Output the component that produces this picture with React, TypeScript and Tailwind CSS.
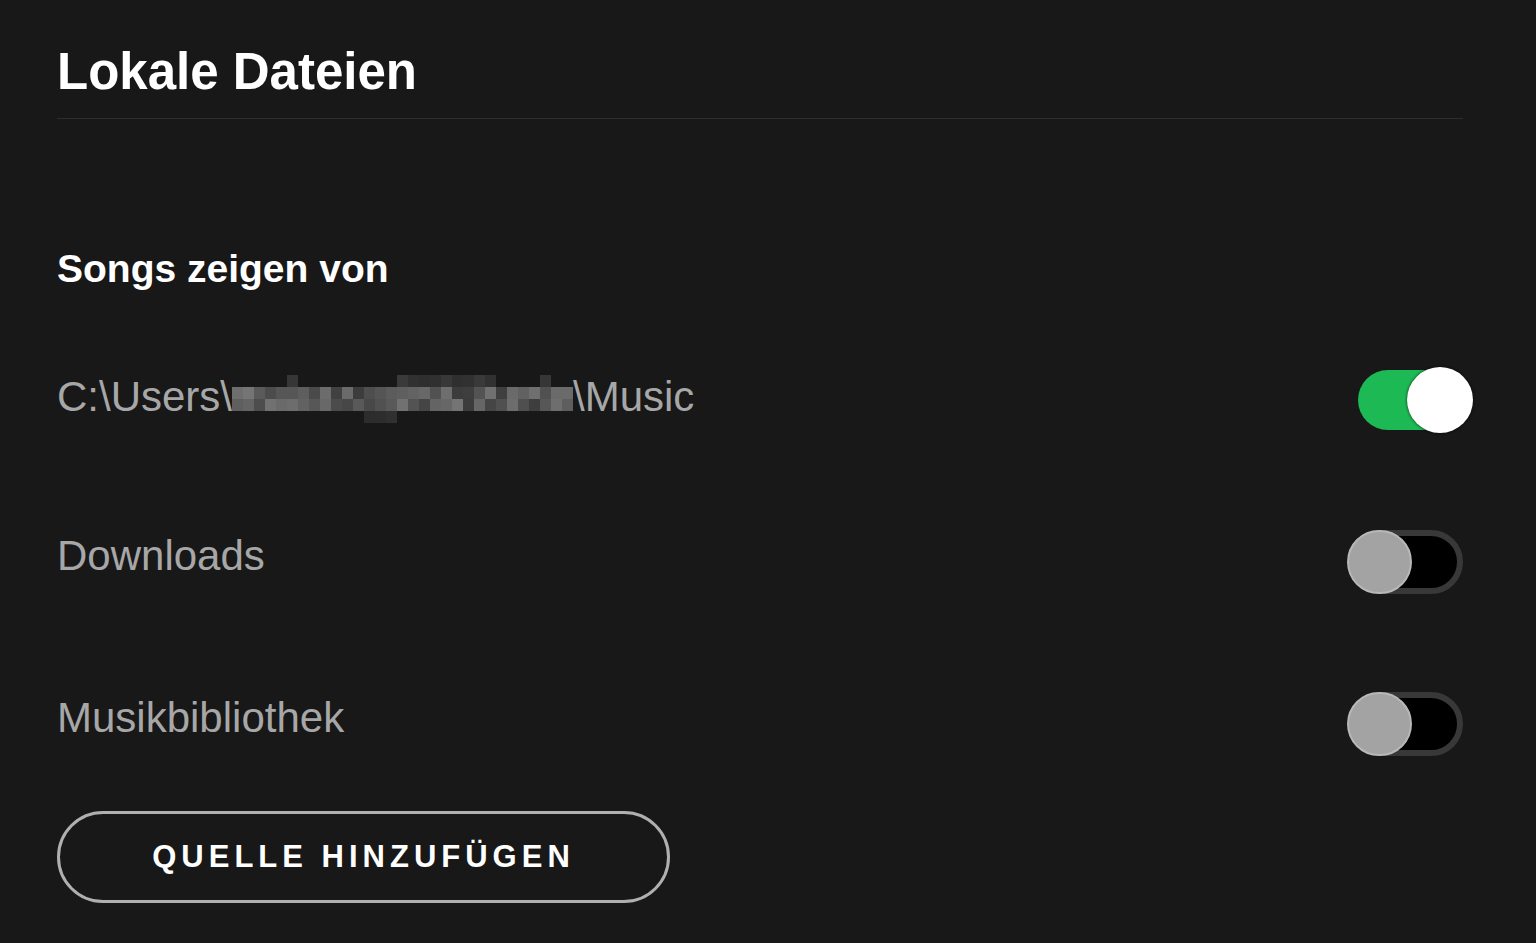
import React from 'react';

// ── blurred user name (pixel mosaic) ──
const Mosaic = () => {
    const cols = 31;
    const cw = 11;
    const ch = 12;
    let seed = 11;
    const rnd = () => {
        seed = (seed * 9301 + 49297) % 233280;
        return seed / 233280;
    };
    const gray = (lo: number, hi: number) => {
        const v = Math.round(lo + rnd() * (hi - lo));
        const h = v.toString(16).padStart(2, '0');
        return `#${h}${h}${h}`;
    };
    const cells: { x: number; y: number; c: string }[] = [];
    // ascender row, sparse
    [5, 15, 16, 17, 18, 19, 20, 21, 22, 23, 28].forEach((c) => {
        cells.push({ x: c * cw, y: 0, c: gray(0x2c, 0x3c) });
    });
    // two body rows
    for (let r = 0; r < 2; r++) {
        for (let c = 0; c < cols; c++) {
            cells.push({ x: c * cw, y: ch + r * ch, c: gray(0x3a, 0x78) });
        }
    }
    // descender of the "y"
    [12, 13, 14].forEach((c) => {
        cells.push({ x: c * cw, y: 3 * ch, c: gray(0x2c, 0x38) });
    });
    return (
        <svg width="341" height="48" viewBox="0 0 341 48" className="shrink-0 mt-[4px]">
            {cells.map((k, i) => (
                <rect key={i} x={k.x} y={k.y} width={cw} height={ch} fill={k.c} />
            ))}
        </svg>
    );
};

// ── toggle ──
function Toggle({ on }: { on: boolean }) {
    if (on) {
        return (
            <div className="relative w-[116px] h-[66px] -mr-[10px] shrink-0">
                <div className="absolute left-[1px] top-[3px] w-[112px] h-[60px] rounded-full bg-[#1db954]" />
                <div className="absolute right-0 top-0 w-[66px] h-[66px] rounded-full bg-white shadow-[0_0_3px_rgba(0,0,0,0.8)]" />
            </div>
        );
    }
    return (
        <div className="relative w-[116px] h-[64px] shrink-0">
            <div className="absolute left-[4px] right-0 top-0 bottom-0 rounded-full bg-black border-[6px] border-[#383838]" />
            <div className="absolute left-0 top-0 w-[65px] h-[64px] rounded-full bg-[#a3a3a3] border-2 border-[#b8b8b8]" />
        </div>
    );
}

function Row({ children, on, first }: { children: React.ReactNode; on: boolean; first?: boolean }) {
    return (
        <div className="h-[162px] flex items-center justify-between">
            <div className={`flex items-center text-[42px] leading-none text-[#a7a7a7] ${first ? 'mb-[6px]' : 'mb-3'}`}>
                {children}
            </div>
            <Toggle on={on} />
        </div>
    );
}

export default function App() {
    return (
        <div
            className="w-[1536px] h-[943px] bg-[#181818] overflow-hidden pt-[46px] pl-[57px] pr-[73px]"
            style={{ fontFamily: '"Liberation Sans", Arial, sans-serif' }}
        >
            <h1 className="text-[51px] leading-none font-bold text-white">Lokale Dateien</h1>
            <div className="mt-[21px] h-px bg-[#2e2e2e]" />

            <h2 className="mt-[130px] text-[39px] leading-none font-bold text-white">Songs zeigen von</h2>

            <div className="mt-[31px]">
                <Row on first>
                    <span>C:\Users\</span>
                    <Mosaic />
                    <span>\Music</span>
                </Row>
                <Row on={false}>
                    <span>Downloads</span>
                </Row>
                <Row on={false}>
                    <span>Musikbibliothek</span>
                </Row>
            </div>

            <button className="mt-[6px] w-[613px] h-[92px] rounded-full border-[3px] border-[#b0b0b0] text-white text-[31px] font-bold tracking-[5px] flex items-center justify-center">
                QUELLE HINZUFÜGEN
            </button>
        </div>
    );
}
